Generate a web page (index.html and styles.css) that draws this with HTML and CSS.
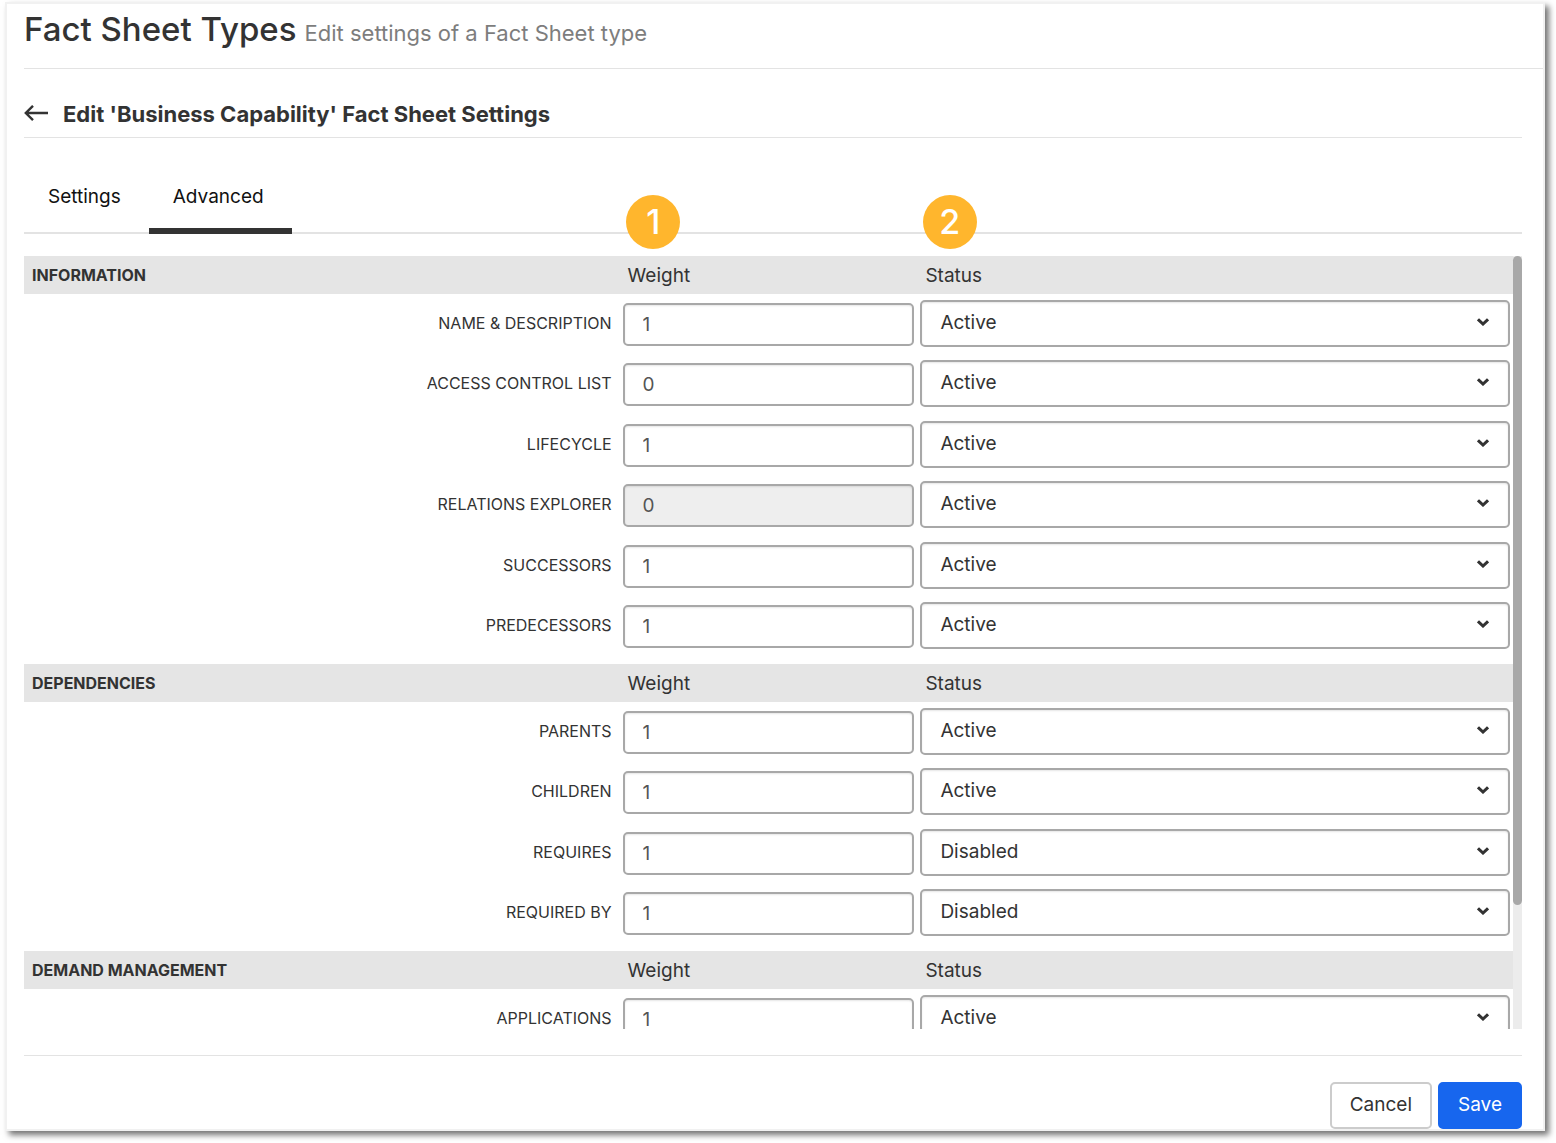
FILE: index.html
```html
<!DOCTYPE html>
<html lang="en">
<head>
    <meta charset="UTF-8">
    <meta name="viewport" content="width=device-width, initial-scale=1.0">
    <title>Fact Sheet Types</title>
    <link rel="stylesheet" href="styles.css">
</head>
<body>
    <main class="panel">
        <header class="page-header">
            <h1>Fact Sheet Types</h1>
            <p>Edit settings of a Fact Sheet type</p>
        </header>

        <div class="content">
            <div class="sub-header">
                <a href="#" class="back" aria-label="Back">
                    <svg width="25" height="18" viewBox="0 0 25 18" fill="none" stroke="currentColor" stroke-width="2.4">
                        <path d="M24 8H2M9 0.8L1.8 8L9 15.2"/>
                    </svg>
                </a>
                <h2>Edit 'Business Capability' Fact Sheet Settings</h2>
            </div>

            <nav class="tabs">
                <a href="#" class="tab">Settings</a>
                <a href="#" class="tab active">Advanced</a>
            </nav>

            <form class="settings-form" id="settings-form">
                <div class="scroll-area">
                    <div class="sections">
                        <section>
                            <div class="section-header"><h3>INFORMATION</h3><span>Weight</span><span>Status</span></div>
                            <div class="rows">
                                <div class="row">
                                    <label for="name">NAME &amp; DESCRIPTION</label>
                                    <input type="text" id="name" value="1">
                                    <select aria-label="Name status"><option>Active</option></select>
                                </div>
                                <div class="row">
                                    <label for="acl">ACCESS CONTROL LIST</label>
                                    <input type="text" id="acl" value="0">
                                    <select aria-label="Access control list status"><option>Active</option></select>
                                </div>
                                <div class="row">
                                    <label for="lifecycle">LIFECYCLE</label>
                                    <input type="text" id="lifecycle" value="1">
                                    <select aria-label="Lifecycle status"><option>Active</option></select>
                                </div>
                                <div class="row">
                                    <label for="relations">RELATIONS EXPLORER</label>
                                    <input type="text" id="relations" value="0" disabled>
                                    <select aria-label="Relations explorer status"><option>Active</option></select>
                                </div>
                                <div class="row">
                                    <label for="successors">SUCCESSORS</label>
                                    <input type="text" id="successors" value="1">
                                    <select aria-label="Successors status"><option>Active</option></select>
                                </div>
                                <div class="row">
                                    <label for="predecessors">PREDECESSORS</label>
                                    <input type="text" id="predecessors" value="1">
                                    <select aria-label="Predecessors status"><option>Active</option></select>
                                </div>
                            </div>
                        </section>
                        <section>
                            <div class="section-header"><h3>DEPENDENCIES</h3><span>Weight</span><span>Status</span></div>
                            <div class="rows">
                                <div class="row">
                                    <label for="parents">PARENTS</label>
                                    <input type="text" id="parents" value="1">
                                    <select aria-label="Parents status"><option>Active</option></select>
                                </div>
                                <div class="row">
                                    <label for="children">CHILDREN</label>
                                    <input type="text" id="children" value="1">
                                    <select aria-label="Children status"><option>Active</option></select>
                                </div>
                                <div class="row">
                                    <label for="requires">REQUIRES</label>
                                    <input type="text" id="requires" value="1">
                                    <select aria-label="Requires status"><option>Disabled</option></select>
                                </div>
                                <div class="row">
                                    <label for="required-by">REQUIRED BY</label>
                                    <input type="text" id="required-by" value="1">
                                    <select aria-label="Required by status"><option>Disabled</option></select>
                                </div>
                            </div>
                        </section>
                        <section>
                            <div class="section-header"><h3>DEMAND MANAGEMENT</h3><span>Weight</span><span>Status</span></div>
                            <div class="rows">
                                <div class="row">
                                    <label for="applications">APPLICATIONS</label>
                                    <input type="text" id="applications" value="1">
                                    <select aria-label="Applications status"><option>Active</option></select>
                                </div>
                            </div>
                        </section>
                    </div>
                </div>
                <div class="scroll-track"><div class="scroll-thumb"></div></div>
                <span class="badge badge-weight">1</span>
                <span class="badge badge-status">2</span>
            </form>

            <footer class="actions">
                <button type="button" class="btn">Cancel</button>
                <button type="submit" form="settings-form" class="btn btn-primary">Save</button>
            </footer>
        </div>
    </main>
</body>
</html>
```

FILE: styles.css
```css
:root {
    --text: #333;
    --line: #e3e3e3;
    --border: #a8a8a8;
    --primary: #1766ee;
    --badge: #ffb62d;
}

* {
    margin: 0;
    padding: 0;
    box-sizing: border-box;
}

body {
    display: flex;
    height: 100vh;
    padding: 2px 11px 12px 5px;
    font-family: Inter, "Liberation Sans", sans-serif;
    font-size: 19px;
    color: var(--text);
    background: #fff;
}

a {
    color: inherit;
    text-decoration: none;
}

.panel {
    flex: 1;
    min-width: 0;
    display: flex;
    flex-direction: column;
    padding-left: 17px;
    background: #fff;
    border: 2px solid #f1f1f1;
    box-shadow: 4px 4px 6px rgba(0, 0, 0, 0.55);
}

.page-header {
    display: flex;
    align-items: baseline;
    gap: 8px;
    height: 65px;
    padding-top: 5px;
    border-bottom: 1px solid var(--line);
}

.page-header h1 {
    font-size: 33px;
    line-height: 40px;
    font-weight: 500;
}

.page-header p {
    font-size: 22px;
    color: #7d7d7d;
}

.content {
    flex: 1;
    min-height: 0;
    display: flex;
    flex-direction: column;
    padding-right: 21px;
}

.sub-header {
    display: flex;
    align-items: center;
    gap: 14px;
    height: 69px;
    padding-top: 22px;
    border-bottom: 1px solid var(--line);
}

.back svg {
    display: block;
}

.sub-header h2 {
    font-size: 22px;
    font-weight: 700;
}

.tabs {
    display: flex;
    height: 96px;
    padding-top: 24px;
    border-bottom: 2px solid var(--line);
}

.tab {
    height: 72px;
    padding: 23px 28px 0 24px;
    line-height: 24px;
    color: #111;
}

.tab.active {
    border-bottom: 6px solid var(--text);
}

.settings-form {
    position: relative;
    flex: 1;
    min-height: 0;
    display: flex;
    margin: 22px 0 26px;
}

.badge {
    position: absolute;
    top: -61px;
    width: 54px;
    height: 54px;
    border-radius: 50%;
    background: var(--badge);
    color: #fff;
    font: 500 34px/54px Inter, "Liberation Sans", sans-serif;
    text-align: center;
}

.badge-weight {
    left: calc(40% + 3px);
}

.badge-status {
    left: 60%;
}

.scroll-area {
    flex: 1;
    overflow-y: auto;
    scrollbar-width: none;
}

.scroll-track {
    width: 9px;
    background: #ececec;
}

.scroll-thumb {
    height: 84%;
    border-radius: 5px;
    background: #a8a8a8;
}

.sections {
    display: grid;
    gap: 7px;
    padding-bottom: 124px;
}

.section-header, .row {
    display: grid;
    grid-template-columns: 40% 20% 40%;
    align-items: center;
}

.section-header {
    height: 38px;
    background: #e5e5e5;
}

.section-header > * {
    padding-left: 8px;
}

.section-header h3 {
    font-size: 16px;
    font-weight: 700;
}

.rows {
    display: grid;
    grid-auto-rows: 60px 61px;
}

.row {
    padding-top: 6px;
    align-items: start;
}

.row label {
    padding-right: 8px;
    font-size: 16px;
    line-height: 46px;
    text-align: right;
}

.row input, .row select {
    margin: 0 3px;
    padding: 0 18px;
    border: 2px solid var(--border);
    border-radius: 5px;
    background: #fff;
    box-shadow: inset 0 1px 2px rgba(0, 0, 0, 0.1);
    font: inherit;
    color: var(--text);
}

.row input {
    height: 43px;
    margin-top: 3px;
    min-width: 0;
    color: #555;
}

.row input:disabled {
    background: #eee;
}

.row select {
    height: 47px;
    padding-bottom: 2px;
    appearance: none;
    background: #fff url("data:image/svg+xml,%3Csvg xmlns='http://www.w3.org/2000/svg' width='12' height='8' fill='none' stroke='%23333' stroke-width='3'%3E%3Cpath d='M1 1.3L6 6L11 1.3'/%3E%3C/svg%3E") no-repeat right 19px top 16px;
}

.actions {
    display: flex;
    justify-content: flex-end;
    gap: 6px;
    padding-top: 26px;
    border-top: 1px solid var(--line);
}

.btn {
    height: 47px;
    padding: 0 18px 2px;
    border: 2px solid #ccc;
    border-radius: 5px;
    background: #fff;
    font: inherit;
    color: var(--text);
}

.btn-primary {
    border-color: var(--primary);
    background: var(--primary);
    color: #fff;
}
```
